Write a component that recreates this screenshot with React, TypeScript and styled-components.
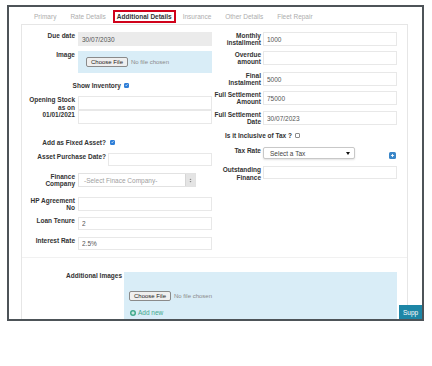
import styled, { createGlobalStyle } from 'styled-components';

const GlobalStyle = createGlobalStyle`
  body {
    margin: 0;
    background: #fff;
    font-family: "Liberation Sans", Arial, sans-serif;
  }
`;

const Frame = styled.div`
  position: relative;
  margin: 5px 0 0 7px;
  width: 417px;
  height: 316px;
  box-sizing: border-box;
  border: 2px solid #4d5358;
  overflow: hidden;
  background: #fff;
  display: flex;
  flex-direction: column;
`;

const TabBar = styled.div`
  display: flex;
  align-items: flex-start;
  height: 17px;
  padding: 3px 0 0 18px;
  box-sizing: border-box;
  flex-shrink: 0;
`;

const Tab = styled.div<{ $active?: boolean }>`
  box-sizing: border-box;
  height: 13px;
  font-size: 6.5px;
  white-space: nowrap;
  padding: ${p => (p.$active ? '0 2px' : '0 7px')};
  line-height: ${p => (p.$active ? '9px' : '13px')};
  color: ${p => (p.$active ? '#333' : '#adadad')};
  font-weight: ${p => (p.$active ? 'bold' : 'normal')};
  border: ${p => (p.$active ? '2px solid #d0021b' : 'none')};
`;

const Panel = styled.div`
  flex: 1;
  margin-left: 12px;
  width: 387px;
  box-sizing: border-box;
  border: 1px solid #e6e6e6;
  border-bottom: none;
`;

const Columns = styled.div`
  display: flex;
`;

const Column = styled.div<{ $w: number }>`
  width: ${p => p.$w}px;
  display: flex;
  flex-direction: column;
`;

const Row = styled.div<{ $mt: number }>`
  display: flex;
  align-items: flex-start;
  margin-top: ${p => p.$mt}px;
`;

const CheckRow = styled.div<{ $mt: number }>`
  display: flex;
  align-items: center;
  height: 10px;
  margin-top: ${p => p.$mt}px;
`;

const Label = styled.div<{ $w: number; $gap?: number; $lh?: number }>`
  flex-shrink: 0;
  width: ${p => p.$w}px;
  margin-right: ${p => p.$gap ?? 3}px;
  text-align: right;
  font-size: 6.5px;
  font-weight: bold;
  line-height: ${p => p.$lh ?? 7}px;
  color: #333;
`;

const Input = styled.input<{ $w?: number; $h?: number; $grey?: boolean }>`
  box-sizing: border-box;
  width: ${p => p.$w ?? 134}px;
  height: ${p => p.$h ?? 14}px;
  margin: 0;
  padding: 0 3px;
  border: 1px solid ${p => (p.$grey ? '#ebebeb' : '#e8e8e8')};
  background: ${p => (p.$grey ? '#ebebeb' : '#fff')};
  font-family: inherit;
  font-size: 6.5px;
  color: #555;
  outline: none;
`;

const Stack = styled.div`
  display: flex;
  flex-direction: column;
`;

const FileBox = styled.div<{ $w: number; $h: number; $pad: string }>`
  box-sizing: border-box;
  width: ${p => p.$w}px;
  height: ${p => p.$h}px;
  padding: ${p => p.$pad};
  background: #d9edf7;
  display: flex;
  flex-direction: column;
`;

const FileLine = styled.div`
  display: flex;
  align-items: center;
`;

const FileButton = styled.span`
  box-sizing: border-box;
  height: 10px;
  padding: 0 4px;
  border: 1px solid #8a8a8a;
  border-radius: 2px;
  background: #efefef;
  font-size: 6px;
  line-height: 8px;
  color: #222;
  white-space: nowrap;
`;

const NoFile = styled.span`
  margin-left: 3px;
  font-size: 6px;
  color: #8a8a8a;
  white-space: nowrap;
`;

const Check = styled.span<{ $on?: boolean }>`
  box-sizing: border-box;
  width: 5px;
  height: 5px;
  border-radius: 1px;
  margin-left: 3px;
  background: ${p => (p.$on ? '#2f7fd8' : '#fff')};
  border: 1px solid ${p => (p.$on ? '#2f7fd8' : '#8c8c8c')};
  display: flex;
  align-items: center;
  justify-content: center;
`;

const SelectBox = styled.div<{ $w: number; $h: number; $shadow?: boolean }>`
  box-sizing: border-box;
  width: ${p => p.$w}px;
  height: ${p => p.$h}px;
  display: flex;
  align-items: center;
  border: 1px solid ${p => (p.$shadow ? '#c8c8c8' : '#e2e2e2')};
  border-radius: ${p => (p.$shadow ? 2 : 0)}px;
  box-shadow: ${p => (p.$shadow ? '0 1px 2px rgba(0,0,0,0.12)' : 'none')};
  font-size: 6.5px;
  background: #fff;
`;

const SelectText = styled.span<{ $muted?: boolean }>`
  flex: 1;
  padding-left: ${p => (p.$muted ? 5 : 6)}px;
  color: ${p => (p.$muted ? '#a0a0a0' : '#444')};
  white-space: nowrap;
`;

const ArrowCell = styled.span`
  width: 9px;
  height: 100%;
  background: #e4e4e4;
  border-left: 1px solid #d6d6d6;
  display: flex;
  align-items: center;
  justify-content: center;
`;

const Caret = styled.span`
  width: 0;
  height: 0;
  margin-right: 4px;
  border-left: 2.5px solid transparent;
  border-right: 2.5px solid transparent;
  border-top: 3px solid #111;
`;

const AddIcon = styled.span`
  margin: 5px 0 0 34px;
  width: 7px;
  height: 7px;
  border-radius: 1.5px;
  background: #3a86c8;
  display: flex;
  align-items: center;
  justify-content: center;
`;

const Divider = styled.div`
  margin-top: 7px;
  height: 1px;
  background: #f1f1f1;
`;

const AddNew = styled.div`
  display: flex;
  align-items: center;
  margin-top: 8px;
  margin-left: 1px;
  font-size: 6.5px;
  color: #3fa98c;
  gap: 2px;
`;

const SupportButton = styled.div`
  position: absolute;
  left: 390px;
  top: 298px;
  width: 24px;
  height: 16px;
  box-sizing: border-box;
  padding-left: 4px;
  background: #1d86a6;
  color: #fff;
  font-size: 6.5px;
  line-height: 16px;
  white-space: nowrap;
`;

const tabs = ['Primary', 'Rate Details', 'Additional Details', 'Insurance', 'Other Details', 'Fleet Repair'];

const TickMark = () => (
  <svg width="4" height="4" viewBox="0 0 8 8">
    <path d="M1.2 4.2 L3.2 6.2 L6.8 1.8" fill="none" stroke="#fff" strokeWidth="1.6" />
  </svg>
);

const PlusMark = ({ size }: { size: number }) => (
  <svg width={size} height={size} viewBox="0 0 8 8">
    <path d="M4 1.5 V6.5 M1.5 4 H6.5" stroke="#fff" strokeWidth="1.4" />
  </svg>
);

const UpDown = () => (
  <svg width="3" height="5" viewBox="0 0 6 10">
    <path d="M3 1 L5 4 H1 Z M3 9 L5 6 H1 Z" fill="#888" />
  </svg>
);

const PlusCircle = () => (
  <svg width="6" height="6" viewBox="0 0 10 10">
    <circle cx="5" cy="5" r="5" fill="#3fa98c" />
    <path d="M5 2.3 V7.7 M2.3 5 H7.7" stroke="#fff" strokeWidth="1.6" />
  </svg>
);

export default function App() {
  return (
    <>
      <GlobalStyle />
      <Frame>
        <TabBar>
          {tabs.map(t => (
            <Tab key={t} $active={t === 'Additional Details'}>{t}</Tab>
          ))}
        </TabBar>
        <Panel>
          <Columns>
            <Column $w={190}>
              <Row $mt={7}>
                <Label $w={53}>Due date</Label>
                <Input $grey readOnly value="30/07/2030" />
              </Row>
              <Row $mt={5}>
                <Label $w={53}>Image</Label>
                <FileBox $w={134} $h={22} $pad="6px 8px">
                  <FileLine>
                    <FileButton>Choose File</FileButton>
                    <NoFile>No file chosen</NoFile>
                  </FileLine>
                </FileBox>
              </Row>
              <CheckRow $mt={7}>
                <Label $w={99} $gap={0}>Show Inventory</Label>
                <Check $on><TickMark /></Check>
              </CheckRow>
              <Row $mt={6}>
                <Label $w={53} $lh={7.5}>Opening Stock<br />as on<br />01/01/2021</Label>
                <Stack>
                  <Input readOnly value="" />
                  <Input readOnly value="" />
                </Stack>
              </Row>
              <CheckRow $mt={13}>
                <Label $w={84} $gap={1}>Add as Fixed Asset?</Label>
                <Check $on><TickMark /></Check>
              </CheckRow>
              <Row $mt={6}>
                <Label $w={84} $gap={2}>Asset Purchase Date?</Label>
                <Input $w={104} $h={13} readOnly value="" />
              </Row>
              <Row $mt={7}>
                <Label $w={53}>Finance Company</Label>
                <SelectBox $w={118} $h={14}>
                  <SelectText $muted>-Select Finace Company-</SelectText>
                  <ArrowCell><UpDown /></ArrowCell>
                </SelectBox>
              </Row>
              <Row $mt={10}>
                <Label $w={53}>HP Agreement No</Label>
                <Input readOnly value="" />
              </Row>
              <Row $mt={6}>
                <Label $w={53}>Loan Tenure</Label>
                <Input $h={13} readOnly value="2" />
              </Row>
              <Row $mt={7}>
                <Label $w={53}>Interest Rate</Label>
                <Input $h={13} readOnly value="2.5%" />
              </Row>
            </Column>
            <Column $w={185}>
              <Row $mt={7}>
                <Label $w={49} $gap={2}>Monthly installment</Label>
                <Input readOnly value="1000" />
              </Row>
              <Row $mt={5}>
                <Label $w={49} $gap={2}>Overdue amount</Label>
                <Input readOnly value="" />
              </Row>
              <Row $mt={7}>
                <Label $w={49} $gap={2}>Final Instalment</Label>
                <Input readOnly value="5000" />
              </Row>
              <Row $mt={5}>
                <Label $w={49} $gap={2}>Full Settlement Amount</Label>
                <Input readOnly value="75000" />
              </Row>
              <Row $mt={6}>
                <Label $w={49} $gap={2}>Full Settlement Date</Label>
                <Input readOnly value="30/07/2023" />
              </Row>
              <CheckRow $mt={5}>
                <Label $w={80} $gap={0}>Is it Inclusive of Tax ?</Label>
                <Check />
              </CheckRow>
              <Row $mt={7}>
                <Label $w={49} $gap={2}>Tax Rate</Label>
                <SelectBox $w={92} $h={12} $shadow>
                  <SelectText>Select a Tax</SelectText>
                  <Caret />
                </SelectBox>
                <AddIcon><PlusMark size={5} /></AddIcon>
              </Row>
              <Row $mt={7}>
                <Label $w={49} $gap={2} $lh={7.5}>Outstanding Finance</Label>
                <Input $h={13} readOnly value="" />
              </Row>
            </Column>
          </Columns>
          <Divider />
          <Row $mt={14}>
            <Label $w={100} $gap={2}>Additional Images</Label>
            <FileBox $w={273} $h={60} $pad="19px 5px">
              <FileLine>
                <FileButton>Choose File</FileButton>
                <NoFile>No file chosen</NoFile>
              </FileLine>
              <AddNew><PlusCircle />Add new</AddNew>
            </FileBox>
          </Row>
        </Panel>
        <SupportButton>Supp</SupportButton>
      </Frame>
    </>
  );
}
